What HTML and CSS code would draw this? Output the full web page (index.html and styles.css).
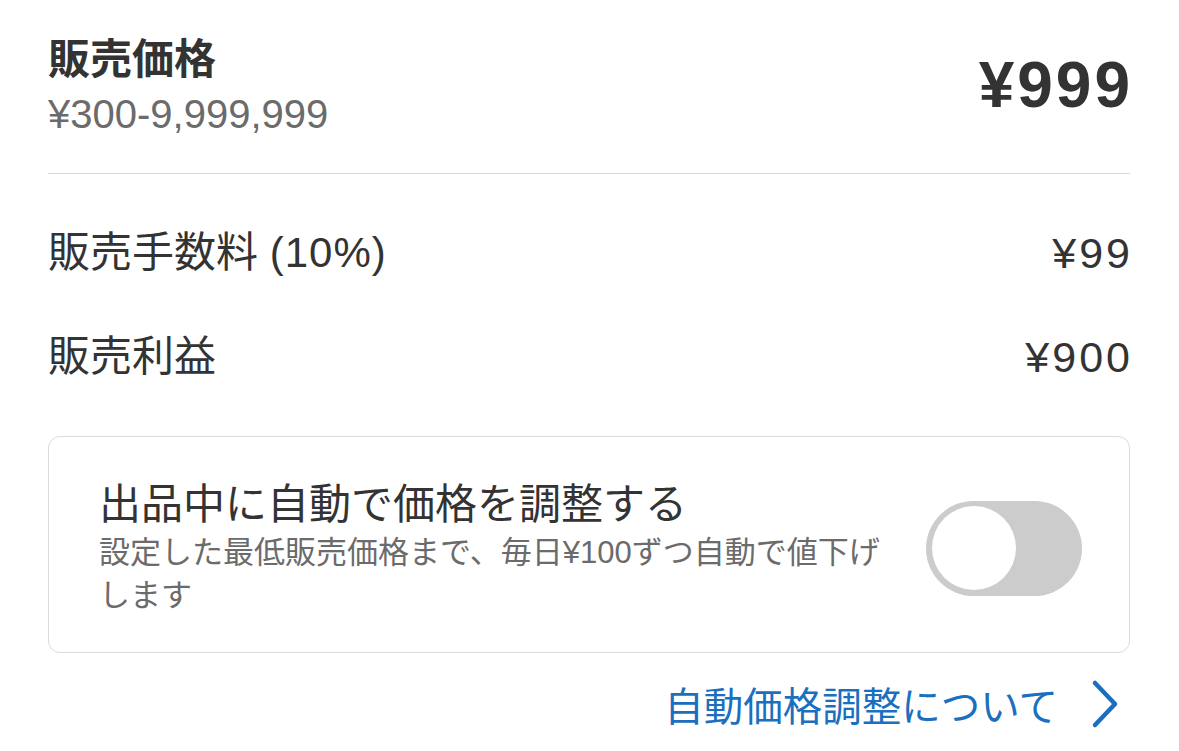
FILE: index.html
```html
<!DOCTYPE html>
<html lang="ja">
<head>
<meta charset="utf-8">
<link rel="stylesheet" href="styles.css">
</head>
<body>
<div class="page">
  <div class="head">
    <div class="head-left">
      <div class="title">販売価格</div>
      <div class="range">¥300-9,999,999</div>
    </div>
    <div class="price">¥999</div>
  </div>
  <div class="divider"></div>
  <div class="row"><span>販売手数料 <span class="pct">(10%)</span></span><span class="num">¥99</span></div>
  <div class="row row2"><span>販売利益</span><span class="num">¥900</span></div>
  <div class="card">
    <div class="card-text">
      <div class="card-title">出品中に自動で価格を調整する</div>
      <div class="card-sub">設定した最低販売価格まで、毎日¥100ずつ自動で値下げします</div>
    </div>
    <div class="toggle"><div class="knob"></div></div>
  </div>
  <div class="link">
    <span>自動価格調整について</span>
    <svg class="chev" width="30" height="50" viewBox="0 0 30 50"><path d="M5 4 L25 25 L5 46" fill="none" stroke="#1b6fbf" stroke-width="4.5" stroke-linecap="round" stroke-linejoin="round"/></svg>
  </div>
</div>
</body>
</html>
```
FILE: styles.css
```css
html, body {
  margin: 0;
  padding: 0;
  background: #fff;
}
body {
  font-family: "Liberation Sans", "Noto Sans CJK JP", sans-serif;
  color: #333;
}
.page {
  padding: 30px 49px 0 48px;
}
.head {
  display: flex;
  justify-content: space-between;
  align-items: center;
  padding-bottom: 35px;
}
.title {
  font-size: 42px;
  font-weight: 700;
  line-height: 60px;
}
.range {
  font-size: 40px;
  color: #6b6b6b;
  line-height: 48px;
}
.price {
  font-size: 64px;
  font-weight: 700;
  color: #333;
  margin-top: 2px;
  letter-spacing: 3px;
  margin-right: -3px;
}
.divider {
  height: 1px;
  background: #d9d9d9;
}
.row {
  display: flex;
  justify-content: space-between;
  font-size: 42px;
  line-height: 56px;
  margin-top: 51px;
}
.row2 {
  margin-top: 48px;
}
.pct {
  letter-spacing: 1px;
}
.num {
  font-size: 43px;
  letter-spacing: 3px;
  margin-right: -3px;
}
.card {
  margin-top: 51px;
  border: 1.5px solid #dcdcdc;
  border-radius: 12px;
  display: flex;
  align-items: center;
  padding: 42px 47px 35px 50px;
  gap: 28px;
}
.card-text {
  flex: 1;
}
.card-title {
  font-size: 42px;
  line-height: 52px;
}
.card-sub {
  font-size: 31px;
  color: #6b6b6b;
  line-height: 43px;
  margin-top: 0;
}
.toggle {
  width: 156px;
  height: 95px;
  border-radius: 48px;
  background: #cccccc;
  flex: none;
  display: flex;
  align-items: center;
  padding-left: 6px;
  box-sizing: border-box;
}
.knob {
  width: 84px;
  height: 84px;
  border-radius: 50%;
  background: #fff;
}
.link {
  display: flex;
  justify-content: flex-end;
  align-items: center;
  gap: 32px;
  margin-top: 22px;
  color: #1b6fbf;
  font-size: 39.5px;
  padding-right: 10px;
}
```
